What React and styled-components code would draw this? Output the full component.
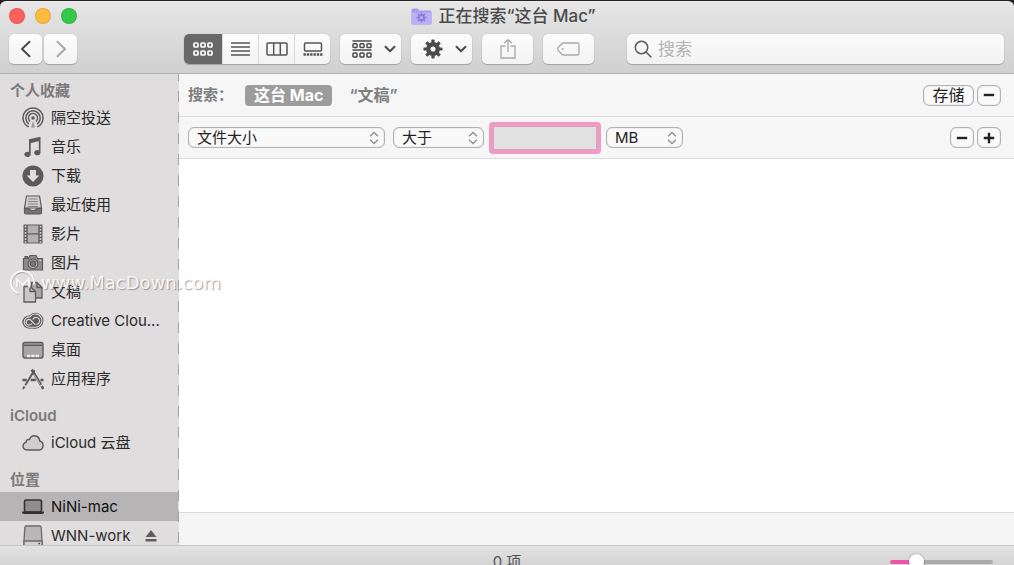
/* eslint-disable react/prop-types */
import React from 'react'
import styled, { createGlobalStyle } from 'styled-components'

const GlobalStyle = createGlobalStyle`
  :root {
    --text: #2b2a2b;
    --muted: #737172;
    --glyph: #5c5a5b;
    --bar: #f6f6f6;
    --line: #dcdcdc;
    --control-line: #b3b3b3;
    --accent: #ef53ad;
  }
  * {
    box-sizing: border-box;
  }
  body {
    margin: 0;
    background: #262223;
  }
  body, button, input, select {
    font-family: Inter, 'Noto Sans CJK SC', sans-serif;
  }
`

const Window = styled.div`
  position: relative;
  height: 100vh;
  display: flex;
  flex-direction: column;
  overflow: hidden;
  border-top: 1px solid #262223;
`

const Header = styled.header`
  flex: none;
  border-top: 1px solid #f0f0f0;
  border-bottom: 1px solid #b1b1b1;
  border-radius: 6px 6px 0 0;
  background: linear-gradient(#e6e6e6, #d0d0d0);
`

const TitleBar = styled.div`
  display: grid;
  grid-template-columns: 80px 1fr 96px;
  align-items: center;
  height: 28px;
  padding-left: 9px;
`

const Lights = styled.div`
  display: flex;
  gap: 10px;
`

const Light = styled.button`
  width: 16px;
  height: 16px;
  padding: 0;
  border: 1px solid rgba(0, 0, 0, 0.1);
  border-radius: 50%;
  background: ${p => p.$color};
`

const Title = styled.h1`
  display: flex;
  align-items: center;
  justify-content: center;
  gap: 6px;
  margin: 0;
  font-size: 17px;
  font-weight: 500;
  line-height: 24px;
  color: #4a4a4a;
`

const Toolbar = styled.div`
  display: flex;
  align-items: center;
  gap: 10px;
  padding: 4px 10px 9px 9px;
`

const NavGroup = styled.div`
  display: flex;
  gap: 2px;
  width: 165px;
`

const ToolButton = styled.button`
  display: flex;
  align-items: center;
  justify-content: center;
  gap: 12px;
  width: ${p => (p.$menu ? 61 : p.$wide ? 51 : 33)}px;
  height: 30px;
  padding: 0 0 0 ${p => (p.$menu ? 6 : 0)}px;
  border: 0;
  border-radius: 5px;
  background: linear-gradient(#fcfcfc, #f3f3f3);
  box-shadow: 0 1px 1px rgba(0, 0, 0, 0.2), 0 0 1px rgba(0, 0, 0, 0.25);
  color: ${p => (p.$dim ? '#a9a9a9' : '#4b4b4b')};
`

const Segments = styled.div`
  display: flex;
  width: 146px;
  height: 30px;
  overflow: hidden;
  border-radius: 5px;
  background: linear-gradient(#fcfcfc, #f3f3f3);
  box-shadow: 0 1px 1px rgba(0, 0, 0, 0.2), 0 0 1px rgba(0, 0, 0, 0.25);
`

const Segment = styled.button`
  flex: ${p => (p.$active ? '0 0 39px' : '1')};
  display: flex;
  align-items: center;
  justify-content: center;
  padding: 0;
  border: 0;
  border-right: 1px solid #dadada;
  background: ${p => (p.$active ? '#686868' : 'transparent')};
  color: ${p => (p.$active ? '#fff' : '#555')};
  &:last-child {
    border-right: 0;
  }
`

const SearchBox = styled.label`
  flex: 1;
  display: flex;
  align-items: center;
  gap: 6px;
  height: 30px;
  min-width: 0;
  margin-left: 23px;
  padding: 0 7px;
  border-radius: 5px;
  background: linear-gradient(#fbfbfb, #f2f2f2);
  box-shadow: 0 1px 1px rgba(0, 0, 0, 0.2), 0 0 1px rgba(0, 0, 0, 0.25);
  color: #5a5a5a;
`

const SearchInput = styled.input`
  flex: 1;
  min-width: 0;
  padding: 0;
  border: 0;
  outline: 0;
  background: transparent;
  font-size: 17px;
  line-height: 24px;
  &::placeholder {
    color: #b3b3b3;
  }
`

const Body = styled.div`
  flex: 1;
  min-height: 0;
  display: flex;
`

const Sidebar = styled.nav`
  flex: none;
  width: 179px;
  padding-top: 5px;
  overflow: hidden;
  /* broken divider along the right edge */
  background:
    repeating-linear-gradient(#a3a1a2 0 7px, transparent 7px 17px, #a3a1a2 17px 21px)
      right / 1px 100% no-repeat,
    #dfdddd;
`

const Section = styled.section`
  margin-bottom: 11px;
`

const SectionTitle = styled.h2`
  margin: 0;
  padding-left: 10px;
  font-size: 15px;
  font-weight: 600;
  line-height: 24px;
  color: #7b797a;
`

const Places = styled.ul`
  margin: 0;
  padding: 0;
  list-style: none;
`

const Place = styled.li`
  display: flex;
  align-items: center;
  height: 29px;
  margin-right: 1px;
  padding-left: 22px;
  background: ${p => (p.$selected ? '#b6b4b5' : 'transparent')};
`

const PlaceLink = styled.a`
  display: flex;
  align-items: center;
  gap: 7px;
  flex: 1;
  color: ${p => (p.$selected ? '#111' : 'var(--text)')};
  font-size: 15px;
  line-height: 24px;
  white-space: nowrap;
  text-decoration: none;
  svg {
    flex: none;
    color: ${p => (p.$selected ? '#333' : 'var(--glyph)')};
  }
`

const Eject = styled.button`
  display: flex;
  margin-right: 21px;
  padding: 0;
  border: 0;
  background: transparent;
  color: #5f5d5e;
`

const Main = styled.main`
  flex: 1;
  min-width: 0;
  display: flex;
  flex-direction: column;
  background: #fff;
`

const Bar = styled.div`
  flex: none;
  display: flex;
  align-items: center;
  height: ${p => p.$height}px;
  padding: 0 13px 0 9px;
  border-bottom: 1px solid var(--line);
  background: var(--bar);
`

const ScopeLabel = styled.span`
  width: 57px;
  font-size: 15px;
  line-height: 24px;
  font-weight: 600;
  white-space: nowrap;
  color: #7e7e7e;
`

const Scope = styled.button`
  height: 21px;
  padding: 0 9px;
  border: 0;
  border-radius: 4px;
  background: ${p => (p.$active ? '#9c9c9c' : 'transparent')};
  color: ${p => (p.$active ? '#fff' : '#7e7e7e')};
  font-size: 16px;
  font-weight: ${p => (p.$active ? 700 : 600)};
  line-height: 20px;
  margin-right: 8px;
`

const Actions = styled.div`
  display: flex;
  gap: 3px;
  margin-left: auto;
`

const SmallButton = styled.button`
  display: flex;
  align-items: center;
  justify-content: center;
  width: ${p => (p.$wide ? 51 : 24)}px;
  height: 21px;
  padding: 0;
  border: 1px solid var(--control-line);
  border-radius: 6px;
  background: #f9f9f9;
  box-shadow: inset 0 0 1px rgba(0, 0, 0, 0.4);
  color: #222;
  font-size: 16px;
  line-height: 18px;
`

const SelectWrap = styled.div`
  display: grid;
  grid-template-columns: 1fr 20px;
  align-items: center;
  width: ${p => p.$width}px;
  height: 21px;
  border: 1px solid var(--control-line);
  border-radius: 6px;
  background: #f9f9f9;
  box-shadow: inset 0 0 1px rgba(0, 0, 0, 0.4);
  color: #909090;
`

const NativeSelect = styled.select`
  grid-area: 1 / 1 / 2 / 3;
  width: 100%;
  height: 19px;
  padding: 0 20px 0 8px;
  border: 0;
  outline: 0;
  appearance: none;
  background: transparent;
  color: #222;
  font-size: 15px;
  line-height: 19px;
`

const SelectArrows = styled.svg`
  grid-area: 1 / 2 / 2 / 3;
  justify-self: center;
  pointer-events: none;
`

const Criteria = styled.div`
  display: flex;
  align-items: center;
  gap: ${p => p.$gap}px;
`

const SizeInput = styled.input`
  width: 112px;
  height: 32px;
  padding: 0 4px;
  border: 4px solid #f09bc5;
  border-radius: 4px;
  outline: 0;
  background: #e1e1e1;
  box-shadow: inset 0 0 0 1px #d9a3be;
  font-size: 15px;
`

const Results = styled.div`
  flex: 1;
`

const PathBar = styled.div`
  height: 33px;
  border-top: 1px solid var(--line);
  background: #f5f5f5;
`

// only the upper part of the status bar shows
const StatusClip = styled.footer`
  flex: none;
  height: 20px;
  overflow: hidden;
  border-top: 1px solid #c6c6c6;
  background: linear-gradient(#e3e3e3, #d4d4d4);
`

const Status = styled.div`
  display: grid;
  grid-template-columns: 1fr auto 1fr;
  align-items: center;
  height: 31px;
  padding: 0 21px;
  font-size: 15px;
  line-height: 24px;
  color: #555;
`

const Zoom = styled.input`
  grid-column: 3;
  justify-self: end;
  width: 103px;
  height: 16px;
  margin: 0;
  appearance: none;
  background: transparent;
  &::-webkit-slider-runnable-track {
    height: 4px;
    border-radius: 2px;
    background: linear-gradient(90deg, var(--accent) 26%, #ababab 26%);
  }
  &::-webkit-slider-thumb {
    appearance: none;
    width: 15px;
    height: 15px;
    margin-top: -6px;
    border-radius: 50%;
    background: #fff;
    box-shadow: 0 0 2px rgba(0, 0, 0, 0.45);
  }
`

const StatusText = styled.span`
  grid-column: 2;
`

const Watermark = styled.div`
  position: absolute;
  top: 268px;
  left: 10px;
  display: flex;
  align-items: center;
  gap: 5px;
  pointer-events: none;
  color: rgba(255, 255, 255, 0.9);
  font-family: 'DejaVu Sans', sans-serif;
  font-size: 18px;
  line-height: 28px;
  text-shadow: 1px 1px 1px rgba(120, 120, 120, 0.7);
`

const Svg = ({ w = 22, h = 22, children, ...rest }) => (
  <svg
    width={w}
    height={h}
    viewBox={`0 0 ${w} ${h}`}
    fill="none"
    stroke="currentColor"
    strokeWidth="1.4"
    aria-hidden="true"
    {...rest}
  >
    {children}
  </svg>
)

const ChevronDown = () => (
  <Svg w={12} h={8} strokeWidth="2" strokeLinecap="round" strokeLinejoin="round">
    <path d="M1.500 1.800 6 6.200 10.500 1.800" />
  </Svg>
)

const cells = [1, 8, 15]

const GridIcon = () => (
  <Svg w={20} h={16} strokeWidth="1.7">
    {cells.map(x => (
      <React.Fragment key={x}>
        <rect x={x} y="2" width="4" height="4" rx="1" />
        <rect x={x} y="10" width="4" height="4" rx="1" />
      </React.Fragment>
    ))}
  </Svg>
)

const GroupIcon = () => (
  <Svg w={20} h={20} strokeWidth="1.5">
    <path d="M.5 2h19M.5 11h19" />
    {cells.map(x => (
      <React.Fragment key={x}>
        <rect x={x} y="4.7" width="4" height="3.8" rx=".8" />
        <rect x={x} y="14" width="4" height="4" rx=".8" />
      </React.Fragment>
    ))}
  </Svg>
)

const gearTeeth = [0, 45, 90, 135, 180, 225, 270, 315]

const Gear = ({ cx, cy, r, ring }) => (
  <g fill="currentColor" stroke="none" transform={`translate(${cx} ${cy}) scale(${r / 10})`}>
    {gearTeeth.map(a => (
      <rect key={a} x="-1.7" y="-10" width="3.4" height="5" rx=".7" transform={`rotate(${a})`} />
    ))}
    <circle r="5" fill="none" stroke="currentColor" strokeWidth={ring} />
  </g>
)

const FolderIcon = () => (
  <Svg w={21} h={17} stroke="none">
    <path d="M.5 2Q.5.5 2 .5h4.5L8.5 2.500H19q1.500 0 1.500 1.500V15.500q0 1-1 1h-18q-1 0-1-1z" fill="#a99cec" />
    <path d="M.5 4.500h20V15.500q0 1-1 1h-18q-1 0-1-1z" fill="#b9b0f6" />
    <g color="#8f7fd9">
      <Gear cx={10.5} cy={9.5} r={5} ring={3.6} />
    </g>
  </Svg>
)

const icons = {
  airdrop: (
    <Svg strokeWidth="1.5" strokeLinecap="round">
      <path d="M6.200 19.700A10 10 0 1 1 15.800 19.700" />
      <path d="M6.400 16.600A7.200 7.200 0 1 1 15.600 16.600" />
      <path d="M7.600 13.900A4.500 4.500 0 1 1 14.400 13.900" />
      <circle cx="11" cy="11" r="1.800" fill="currentColor" stroke="none" />
      <path d="M9 20.500 11 14l2 6.500z" stroke="none" fill="currentColor" opacity=".5" />
    </Svg>
  ),
  music: (
    <Svg stroke="none" fill="currentColor">
      <path d="M7 3.200 18.500.8V17a3.200 2.600 0 1 1-1.700-2.600V5.300L8.700 7v11.400a3.200 2.600 0 1 1-1.700-2.300z" />
    </Svg>
  ),
  download: (
    <Svg stroke="none">
      <circle cx="11" cy="11" r="10.600" fill="currentColor" />
      <path d="M8 5h6v5.500h3.300L11 17l-6.300-6.500H8z" fill="#dfdddd" />
    </Svg>
  ),
  recents: (
    <Svg strokeWidth="1.200">
      <path d="M4.500 2h13l2 12H2.500z" fill="#d0cecf" />
      <path d="M6.500 5h9M6.200 7.500h9.600M6 10h10M5.700 12.500h10.600" stroke="#858384" />
      <path d="M2.500 14.500h4.500q.5 2 4 2t4-2h4.500v4q0 1.500-1.500 1.500H4q-1.500 0-1.500-1.500z" fill="#737172" />
    </Svg>
  ),
  movies: (
    <Svg>
      <path d="M1.500 1.500h19v19h-19z" fill="#5f5d5e" stroke="none" />
      <path d="M5.700 2.500h10.600v7.800H5.700zM5.700 11.600h10.600v7.900H5.700z" fill="#b3b1b2" stroke="none" />
      <path d="M3.500 2.800v17M18.500 2.800v17" stroke="#d5d3d4" strokeWidth="1.600" strokeDasharray="1.700 1.400" />
    </Svg>
  ),
  pictures: (
    <Svg strokeWidth="1.200">
      <path d="M1.500 6.500h5l1.500-3h6l1.500 3h5V18h-19zM3 6V4.700h2.500V6" fill="#8e8c8d" />
      <circle cx="11" cy="11.700" r="4.900" fill="#c2c0c1" />
      <circle cx="11" cy="11.700" r="2.800" fill="#777576" />
      <path d="M17.500 8.500h1.500" stroke="#e8e8e8" />
    </Svg>
  ),
  documents: (
    <Svg strokeWidth="1.300">
      <path d="M9.500 1.500h5.500l5 5V17H9.500z" fill="#a9a7a8" />
      <path d="M15 1.500v5h5" />
      <path d="M2 5.500h6l5.500 5V21H2z" fill="#c9c7c8" />
      <path d="M8 5.500v5h5.500" />
    </Svg>
  ),
  cloudApps: (
    <Svg strokeLinecap="round">
      <g fill="currentColor" stroke="none">
        <circle cx="13.500" cy="10.700" r="8" />
        <circle cx="6.800" cy="12" r="6.500" />
        <path d="M6.800 15h7v3.600h-7z" />
      </g>
      <g stroke="#dfdddd" strokeWidth="1.100">
        <path d="M8 6.700A6.600 6.600 0 1 1 13.500 17.200H6.800A5.100 5.100 0 1 1 8 6.900" />
        <path d="M9.800 13.800 8.500 14.600A2.800 2.800 0 1 1 8.700 10L13 14.300" />
        <path d="M11 9.200A3.500 3.500 0 1 1 14.500 14.300" />
      </g>
    </Svg>
  ),
  desktop: (
    <Svg strokeWidth="1.400">
      <rect x="1" y="3.500" width="20" height="15.500" rx="2" fill="#a7a5a6" />
      <path d="M1.500 6.300h19" />
      <path d="M5 17h12" stroke="#eee" strokeWidth="2.500" strokeDasharray="3.300 1" />
    </Svg>
  ),
  applications: (
    <Svg strokeWidth="1.900">
      <path d="M12.500 2 3.300 17.300M2.500 18.500 1 21" />
      <path d="M9.700 1.500 19 17M19.700 18.200 21.300 21" strokeWidth="2.600" />
      <path d="M.5 12h4.200M8.800 12h5M18.500 12h3" strokeWidth="2.600" />
      <path d="M12 6.500 18 16.500" stroke="#dfdddd" strokeWidth=".7" />
    </Svg>
  ),
  icloud: (
    <Svg strokeWidth="1.400">
      <path d="M5.300 18q-4.300-.3-4.300-4 .1-3 3-3.600.2-3.400 3.400-2.900Q9 3.500 12.700 3.700q4.700.5 5 5.300 3.400.9 3.400 4.500-.3 4.200-4.100 4.500z" fill="#d0cecf" />
    </Svg>
  ),
  laptop: (
    <Svg strokeWidth="1.600">
      <rect x="2.500" y="4" width="17" height="12" rx="1.500" fill="#8f8d8e" />
      <path d="M0 15.500h22v1.200q-.5 1.300-2 1.300H2q-1.500 0-2-1.300z" fill="currentColor" stroke="none" />
    </Svg>
  ),
  drive: (
    <Svg strokeWidth="1.300" stroke="#6b696a">
      <path d="M4.500 1h13q1.500 0 1.700 1.500l.8 13.500v4q0 1.500-1.500 1.500h-15Q2 21.500 2 20v-4l.8-13.500Q3 1 4.500 1z" fill="#b9b7b8" />
      <path d="M2 16h18v4q0 1.500-1.500 1.500h-15Q2 21.500 2 20z" fill="#d2d0d1" />
      <path d="M16.500 18.500h1.500" stroke="#444" />
    </Svg>
  ),
}

const sections = [
  {
    title: '个人收藏',
    places: [
      { icon: 'airdrop', name: '隔空投送' },
      { icon: 'music', name: '音乐' },
      { icon: 'download', name: '下载' },
      { icon: 'recents', name: '最近使用' },
      { icon: 'movies', name: '影片' },
      { icon: 'pictures', name: '图片' },
      { icon: 'documents', name: '文稿' },
      { icon: 'cloudApps', name: 'Creative Clou...' },
      { icon: 'desktop', name: '桌面' },
      { icon: 'applications', name: '应用程序' },
    ],
  },
  { title: 'iCloud', places: [{ icon: 'icloud', name: 'iCloud 云盘' }] },
  {
    title: '位置',
    places: [
      { icon: 'laptop', name: 'NiNi-mac', selected: true },
      { icon: 'drive', name: 'WNN-work', ejectable: true },
    ],
  },
]

const Select = ({ label, value, width }) => (
  <SelectWrap $width={width}>
    <NativeSelect aria-label={label} defaultValue={value}>
      <option>{value}</option>
    </NativeSelect>
    <SelectArrows width="10" height="14" viewBox="0 0 10 14" fill="none" stroke="currentColor" strokeWidth="1.400">
      <path d="M1 5.200 5 1.500 9 5.200M1 8.800 5 12.500 9 8.800" />
    </SelectArrows>
  </SelectWrap>
)

const Sign = ({ plus }) => (
  <Svg w={12} h={12} strokeWidth="2.400">
    <path d={plus ? 'M.8 6h10.400M6 .8v10.400' : 'M.8 6h10.400'} />
  </Svg>
)

const App = () => (
  <>
    <GlobalStyle />
    <Window>
      <Header>
        <TitleBar>
          <Lights>
            <Light $color="#fc605c" aria-label="关闭" />
            <Light $color="#fdbc40" aria-label="最小化" />
            <Light $color="#34c84a" aria-label="缩放" />
          </Lights>
          <Title>
            <FolderIcon />
            <span>正在搜索“这台 Mac”</span>
          </Title>
        </TitleBar>
        <Toolbar>
          <NavGroup>
            <ToolButton aria-label="返回">
              <Svg w={12} h={18} strokeWidth="2" strokeLinecap="round" strokeLinejoin="round">
                <path d="M9.500 1.700 2 9l7.500 7.300" />
              </Svg>
            </ToolButton>
            <ToolButton $dim aria-label="前进">
              <Svg w={12} h={18} strokeWidth="2" strokeLinecap="round" strokeLinejoin="round">
                <path d="M2.500 1.700 10 9l-7.500 7.300" />
              </Svg>
            </ToolButton>
          </NavGroup>
          <Segments>
            <Segment $active aria-label="图标">
              <GridIcon />
            </Segment>
            <Segment aria-label="列表">
              <Svg w={19} h={14} strokeWidth="1.300">
                <path d="M0 1h19M0 5h19M0 9h19M0 13h19" />
              </Svg>
            </Segment>
            <Segment aria-label="分栏">
              <Svg w={22} h={14} strokeWidth="1.500">
                <rect x="1" y="1" width="20" height="12" rx="1" />
                <path d="M7.700 1v12M14.300 1v12" />
              </Svg>
            </Segment>
            <Segment aria-label="画廊">
              <Svg w={20} h={14} strokeWidth="1.500">
                <rect x="1.500" y="1" width="17" height="8" rx="1" />
                <path d="M.5 12.500h19" strokeWidth="2.400" strokeDasharray="2.400 .92" />
              </Svg>
            </Segment>
          </Segments>
          <ToolButton $menu aria-label="分组">
            <GroupIcon />
            <ChevronDown />
          </ToolButton>
          <ToolButton $menu aria-label="操作">
            <Svg w={20} h={20}>
              <Gear cx={10} cy={10} r={9.5} ring={4.6} />
            </Svg>
            <ChevronDown />
          </ToolButton>
          <ToolButton $wide $dim aria-label="共享">
            <Svg w={16} h={22} strokeWidth="1.300">
              <path d="M5.500 8H1v12h14V8h-4.500M8 14V1.800M4.300 5.300 8 1.600l3.700 3.700" />
            </Svg>
          </ToolButton>
          <ToolButton $wide $dim aria-label="标签">
            <Svg w={23} h={14} strokeWidth="1.300">
              <path d="M6.500 1h14q1.500 0 1.500 1.500v9q0 1.500-1.500 1.500h-14Q5.500 13 4.500 12L1 8.200Q.2 7 1 5.800L4.500 2Q5.500 1 6.500 1z" />
              <circle cx="5.500" cy="7" r="1" fill="currentColor" stroke="none" />
            </Svg>
          </ToolButton>
          <SearchBox>
            <Svg w={18} h={18} strokeWidth="1.500" strokeLinecap="round">
              <circle cx="7.500" cy="7.500" r="6.200" />
              <path d="m12 12 5 5" />
            </Svg>
            <SearchInput placeholder="搜索" aria-label="搜索" />
          </SearchBox>
        </Toolbar>
      </Header>
      <Body>
        <Sidebar>
          {sections.map(section => (
            <Section key={section.title}>
              <SectionTitle>{section.title}</SectionTitle>
              <Places>
                {section.places.map(place => (
                  <Place key={place.name} $selected={place.selected}>
                    <PlaceLink href="#" $selected={place.selected}>
                      {icons[place.icon]}
                      {place.name}
                    </PlaceLink>
                    {place.ejectable && (
                      <Eject aria-label="推出">
                        <Svg w={12} h={12} stroke="none" fill="currentColor">
                          <path d="M6 0 11.500 7H.5zM.5 9h11v2.500H.5z" />
                        </Svg>
                      </Eject>
                    )}
                  </Place>
                ))}
              </Places>
            </Section>
          ))}
        </Sidebar>
        <Main>
          <Bar $height={43}>
            <ScopeLabel>搜索：</ScopeLabel>
            <Scope $active>这台 Mac</Scope>
            <Scope>“文稿”</Scope>
            <Actions>
              <SmallButton $wide>存储</SmallButton>
              <SmallButton aria-label="移除搜索">
                <Sign />
              </SmallButton>
            </Actions>
          </Bar>
          <Bar $height={42}>
            <Criteria $gap={5}>
              <Criteria $gap={8}>
                <Select label="属性" value="文件大小" width={197} />
                <Select label="条件" value="大于" width={91} />
              </Criteria>
              <SizeInput aria-label="大小" />
              <Select label="单位" value="MB" width={77} />
            </Criteria>
            <Actions>
              <SmallButton aria-label="移除条件">
                <Sign />
              </SmallButton>
              <SmallButton aria-label="添加条件">
                <Sign plus />
              </SmallButton>
            </Actions>
          </Bar>
          <Results />
          <PathBar />
        </Main>
      </Body>
      <StatusClip>
        <Status>
          <StatusText>0 项</StatusText>
          <Zoom type="range" min="0" max="100" defaultValue="22" aria-label="图标大小" />
        </Status>
      </StatusClip>
      <Watermark>
        <Svg w={26} h={26} strokeWidth="1.600">
          <g stroke="#aaa">
            <path d="M9 24.500A11.500 11.500 0 1 1 24.500 15" />
            <path d="M7.500 18V9.500l6 6 6-6V18" />
          </g>
          <g stroke="#fff">
            <path d="M8.500 23.500A11.500 11.500 0 1 1 23.800 14.500" />
            <path d="M7 17.500V9l6 6 6-6v8.500" />
          </g>
        </Svg>
        <span>www.MacDown.com</span>
      </Watermark>
    </Window>
  </>
)

export default App
